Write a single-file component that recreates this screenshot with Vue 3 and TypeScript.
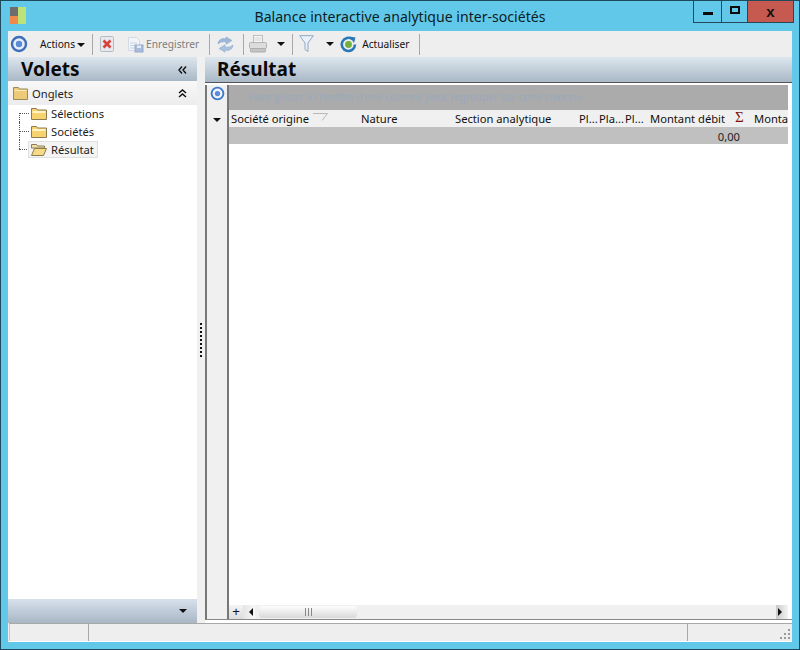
<script setup lang="ts">
interface Col { label: string; width: number }
const cols: Col[] = [
  { label: 'Nature', width: 94 },
  { label: 'Section analytique', width: 124 },
  { label: 'Pl...', width: 20 },
  { label: 'Pla...', width: 26 },
  { label: 'Pl...', width: 25 },
  { label: 'Montant débit', width: 85 },
]
const tree = [
  { label: 'Sélections', open: false },
  { label: 'Sociétés', open: false },
  { label: 'Résultat', open: true },
]
const gripDots = Array.from({ length: 9 })
</script>

<template>
  <div class="window">
    <header class="titlebar">
      <svg class="app-icon" width="16" height="18" viewBox="0 0 16 18">
        <rect x="0" y="0" width="8" height="9" fill="#6d6d6d" />
        <rect x="0" y="9" width="8" height="8" fill="#f08a4b" />
        <rect x="8" y="0" width="8" height="17" fill="#bde27a" />
      </svg>
      <div class="title">Balance interactive analytique inter-sociétés</div>
      <div class="controls">
        <div class="ctl ctl-min"><span class="min-bar"></span></div>
        <div class="ctl ctl-max"><span class="max-box"></span></div>
        <div class="ctl ctl-close">x</div>
      </div>
    </header>

    <div class="client">
      <div class="toolbar">
        <svg class="tb-first" width="18" height="18" viewBox="0 0 18 18">
          <circle cx="9" cy="9" r="7" fill="#e8eef8" stroke="#3d6fb8" stroke-width="2.4" />
          <circle cx="9" cy="9" r="3.2" fill="#5b8ad6" />
        </svg>
        <span class="tb-text actions">Actions</span>
        <span class="caret caret-actions"></span>
        <span class="sep sep-a"></span>
        <svg class="tb-del" width="14" height="16" viewBox="0 0 14 16">
          <rect x="0.500" y="0.500" width="13" height="15" rx="1" fill="#e6e8ee" stroke="#b4bac6" />
          <path d="M3.500 4.500l7 7M10.500 4.500l-7 7" stroke="#d8403a" stroke-width="2.600" />
        </svg>
        <svg class="tb-save" width="17" height="17" viewBox="0 0 17 17">
          <path d="M1.500 1.500h8l3 3v10h-11z" fill="#f2f4f8" stroke="#d3dbe6" />
          <path d="M3 7h7M3 9.500h7M3 12h5" stroke="#c9d4e2" />
          <rect x="8" y="9" width="8" height="7" fill="#a9bcdc" stroke="#94a9cc" />
          <rect x="10" y="9.500" width="4" height="2.500" fill="#e6ecf5" />
        </svg>
        <span class="tb-text disabled">Enregistrer</span>
        <span class="sep sep-b"></span>
        <svg class="tb-sync" width="17" height="17" viewBox="0 0 17 17">
          <path d="M1 8c0-3.500 3.500-6.500 8-5V.8l6 3.700L9 8.200V6C6 5.500 3.500 6 1 8z" fill="#9db7d8" stroke="#8aa5c8" stroke-width="0.500" />
          <path d="M16 9c0 3.500-3.500 6.500-8 5v2.200L2 12.500 8 8.800V11c3 .5 5.500 0 8-2z" fill="#a9c0de" stroke="#8aa5c8" stroke-width="0.500" />
        </svg>
        <span class="sep sep-c"></span>
        <svg class="tb-print" width="18" height="18" viewBox="0 0 18 18">
          <rect x="4.500" y="0.500" width="9" height="7" fill="#f6f6f6" stroke="#bdbdbd" />
          <path d="M5.500 3h7M5.500 5h7" stroke="#d4d4d4" />
          <rect x="0.500" y="7.500" width="17" height="6" rx="1" fill="#dcdcdc" stroke="#b2b2b2" />
          <rect x="1.500" y="13.500" width="15" height="3.500" rx="1" fill="#c4c4c4" stroke="#adadad" />
        </svg>
        <span class="caret caret-print"></span>
        <span class="sep sep-d"></span>
        <svg class="tb-filter" width="15" height="18" viewBox="0 0 15 18">
          <path d="M0.700 0.700h13.600L9 8v8.500l-3-2V8z" fill="#eaf0f7" stroke="#8fa9c6" />
        </svg>
        <span class="caret caret-filter"></span>
        <svg class="tb-refresh" width="17" height="17" viewBox="0 0 17 17">
          <path d="M12.500 3.200A6.600 6.600 0 1 0 15 8.500" fill="none" stroke="#2b78b8" stroke-width="2.600" />
          <circle cx="8.500" cy="8.500" r="3.400" fill="#6fb03f" />
          <path d="M9.500 0.500l6 1-1.500 5.500z" fill="#2b78b8" />
        </svg>
        <span class="tb-text refresh-label">Actualiser</span>
        <span class="sep sep-e"></span>
      </div>

      <div class="workspace">
        <aside class="side">
          <div class="pane-head side-head">
            <span>Volets</span>
            <svg class="chev" width="9" height="8" viewBox="0 0 9 8">
              <path d="M4 0.500L1 4l3 3.500M8 0.500L5 4l3 3.500" fill="none" stroke="#111" stroke-width="1.400" />
            </svg>
          </div>
          <div class="group-head">
            <svg width="15" height="13" viewBox="0 0 15 13">
              <path d="M0.500 0.500h5l1 1.500h8v10.500h-14z" fill="#eeca78" stroke="#9a8a5f" />
              <path d="M1.500 3h12v1h-12z" fill="#fbeebc" />
            </svg>
            <span class="group-label">Onglets</span>
            <svg class="dbl-up" width="9" height="9" viewBox="0 0 9 9">
              <path d="M1 4l3.500-3L8 4M1 8l3.500-3L8 8" fill="none" stroke="#111" stroke-width="1.500" />
            </svg>
          </div>
          <div class="tree">
            <div v-for="(t, i) in tree" :key="t.label" class="tree-row">
              <span class="tree-line" :class="{ first: i === 0, last: i === tree.length - 1 }"></span>
              <div class="tree-item" :class="{ sel: t.open }">
                <svg width="16" height="13" viewBox="0 0 16 13">
                  <template v-if="!t.open">
                    <path d="M0.500 1.500h5l1 1.500h9v9.500h-15z" fill="#f6d36f" stroke="#8c7c50" />
                    <path d="M1.500 4h13v2h-13z" fill="#fdf3c4" />
                  </template>
                  <template v-else>
                    <path d="M0.500 1.500h5l1 1.500h7v2h-13z" fill="#f1e0ae" stroke="#8c7c50" />
                    <path d="M3.500 5.500h12l-3 7h-12z" fill="#f8da86" stroke="#8c7c50" />
                  </template>
                </svg>
                <span class="tree-label">{{ t.label }}</span>
              </div>
            </div>
          </div>
          <div class="side-foot"><span class="foot-caret"></span></div>
        </aside>

        <div class="splitter">
          <div class="grip">
            <i v-for="(_, i) in gripDots" :key="i"></i>
          </div>
        </div>

        <section class="main">
          <div class="pane-head main-head"><span>Résultat</span></div>
          <div class="grid-wrap">
            <div class="row-rail">
              <svg class="rail-icon" width="15" height="15" viewBox="0 0 16 16">
                <circle cx="8" cy="8" r="6.300" fill="#f0f4fb" stroke="#3d79c9" stroke-width="2" />
                <circle cx="8" cy="8" r="2.800" fill="#5b8ad6" />
              </svg>
              <span class="rail-caret"></span>
            </div>
            <div class="grid">
              <div class="grouping">Faire glisser ici l'entête d'une colonne pour regrouper sur cette colonne.</div>
              <div class="col-head">
                <div class="cell first">
                  Société origine
                  <svg class="filter-tri" width="15" height="8" viewBox="0 0 15 8">
                    <path d="M0 0.500h14.500L9 7.500" fill="none" stroke="#b8b8b8" />
                  </svg>
                </div>
                <div v-for="c in cols" :key="c.label + c.width" class="cell" :style="{ width: c.width + 'px' }">{{ c.label }}</div>
                <div class="sigma">Σ</div>
                <div class="cell last">Monta</div>
              </div>
              <div class="total-row"><span>0,00</span></div>
              <div class="grid-body"></div>
              <div class="scrollbar">
                <div class="plus">+</div>
                <div class="arrow-btn left"><span class="tri-left"></span></div>
                <div class="thumb"><span class="thumb-grip"></span></div>
                <div class="track"></div>
                <div class="arrow-btn right"><span class="tri-right"></span></div>
              </div>
            </div>
          </div>
        </section>
      </div>

      <footer class="status">
        <div class="st st-a"></div>
        <div class="st st-b"></div>
        <div class="st st-c">
          <svg class="resize" width="11" height="11" viewBox="0 0 11 11" fill="#9a9a9a">
            <rect x="8" y="0" width="2" height="2" /><rect x="4" y="4" width="2" height="2" /><rect x="8" y="4" width="2" height="2" />
            <rect x="0" y="8" width="2" height="2" /><rect x="4" y="8" width="2" height="2" /><rect x="8" y="8" width="2" height="2" />
          </svg>
        </div>
      </footer>
    </div>
  </div>
</template>

<style>
html, body { margin: 0; padding: 0; background: #62c8ea; }
</style>

<style scoped>
.window {
  width: 800px;
  height: 650px;
  box-sizing: border-box;
  background: #62c8ea;
  border: 1px solid #1f4a5c;
  display: flex;
  flex-direction: column;
  font-family: "Noto Sans", "Open Sans", sans-serif;
  font-size: 11.2px;
  color: #111;
  overflow: hidden;
}
.titlebar {
  height: 30px;
  flex: none;
  display: flex;
  position: relative;
  padding-left: 9px;
}
.app-icon { margin-top: 6px; flex: none; }
.title {
  position: absolute;
  left: 0; right: 0; top: 6px;
  text-align: center;
  font-size: 14.1px;
  line-height: 20px;
  color: #0d1c22;
}
.controls {
  position: absolute;
  top: -1px;
  right: 5px;
  display: flex;
  height: 22px;
  border: 1px solid #26495a;
  border-top: none;
}
.ctl { display: flex; align-items: center; justify-content: center; width: 27px; border-right: 1px solid #26495a; }
.ctl-max { width: 25px; }
.ctl-close { width: 45px; border-right: none; background: #c75a50; font: bold 15px "Liberation Sans", sans-serif; color: #111; }
.min-bar { width: 10px; height: 3px; background: #0b0b0b; margin-top: 4px; }
.max-box { width: 6px; height: 4px; border: 2px solid #0b0b0b; margin-top: -2px; }

.client {
  flex: 1;
  margin: 0 7px 7px 7px;
  background: #f0f0f0;
  display: flex;
  flex-direction: column;
  min-height: 0;
}
.toolbar {
  height: 26px;
  flex: none;
  display: flex;
  align-items: center;
  background: #eeeeee;
  font-size: 10.2px;
}
.tb-first { margin-left: 2px; }
.tb-text { line-height: 16px; }
.actions { margin-left: 12px; }
.caret { width: 0; height: 0; border-left: 4px solid transparent; border-right: 4px solid transparent; border-top: 4px solid #111; }
.caret-actions { margin-left: 2px; margin-top: 2px; }
.sep { width: 1px; height: 21px; background: #a8a8a8; }
.sep-a { margin-left: 7px; }
.tb-del { margin-left: 7px; }
.tb-save { margin-left: 13px; }
.disabled { color: #7d7d7d; margin-left: 2px; }
.sep-b { margin-left: 10px; }
.tb-sync { margin-left: 7px; }
.sep-c { margin-left: 9px; }
.tb-print { margin-left: 5px; }
.caret-print { margin-left: 10px; }
.sep-d { margin-left: 7px; }
.tb-filter { margin-left: 6px; }
.caret-filter { margin-left: 12px; }
.tb-refresh { margin-left: 6px; }
.refresh-label { margin-left: 5px; }
.sep-e { margin-left: 10px; }

.workspace { flex: 1; display: flex; min-height: 0; }
.pane-head {
  height: 25px;
  flex: none;
  background: linear-gradient(#dde6ee, #a9b8c6);
  display: flex;
  align-items: center;
  font: bold 19px/25px "Noto Sans", sans-serif;
  color: #0a0a0a;
}
.side { width: 189px; flex: none; display: flex; flex-direction: column; background: #fff; }
.side-head { height: 24px; box-sizing: border-box; padding: 1px 10px 0 13px; justify-content: space-between; }
.group-head {
  height: 24px;
  flex: none;
  display: flex;
  align-items: center;
  padding-left: 5px;
  background: linear-gradient(#f8f8f8, #ececec);
}
.group-label { margin-left: 4px; color: #222; }
.dbl-up { margin-left: auto; margin-right: 10px; }
.tree { flex: 1; background: #fff; padding-top: 0; }
.tree-row { height: 18px; display: flex; align-items: center; position: relative; padding-left: 20px; top: -1px; }
.tree-line { position: absolute; left: 11px; top: 0; bottom: 0; width: 10px; }
.tree-line::before { content: ""; position: absolute; left: 0; top: 0; height: 100%; border-left: 1px dotted #555; }
.tree-line.first::before { top: 50%; height: 50%; }
.tree-line.last::before { height: 50%; }
.tree-line::after { content: ""; position: absolute; left: 0; right: 0; top: 50%; border-top: 1px dotted #555; }
.tree-item { display: flex; align-items: center; height: 17px; box-sizing: border-box; padding: 0 3px 0 2px; border: 1px solid transparent; position: relative; }
.tree-item.sel { background: #f4f4f4; border-color: #e0e0e0; }
.tree-label { margin-left: 4px; line-height: 15px; color: #222; }
.side-foot {
  height: 24px;
  flex: none;
  background: linear-gradient(#d6e1ec, #a9b6c4);
  display: flex;
  align-items: center;
  justify-content: flex-end;
  padding-right: 10px;
}
.foot-caret, .rail-caret { width: 0; height: 0; border-left: 4px solid transparent; border-right: 4px solid transparent; border-top: 4px solid #111; }

.splitter { width: 8px; flex: none; background: #f0f0f0; display: flex; align-items: center; justify-content: center; }
.grip { display: flex; flex-direction: column; gap: 2px; margin-left: -1px; }
.grip i { display: block; width: 2px; height: 2px; background: #111; }

.main { flex: 1; display: flex; flex-direction: column; min-width: 0; background: #fff; }
.main-head { padding-left: 12px; border-bottom: 1px solid #555; height: 25px; box-sizing: content-box; }
.grid-wrap { flex: 1; display: flex; min-height: 0; margin-top: 2px; margin-bottom: 3px; border-left: 2px solid #777; border-bottom: 1px solid #888; }
.row-rail { width: 20px; flex: none; background: #f0f0f0; border-right: 2px solid #777; display: flex; flex-direction: column; align-items: center; }
.rail-icon { margin-top: 1px; }
.rail-caret { margin-top: 17px; }
.grid { flex: 1; min-width: 0; display: flex; flex-direction: column; overflow: hidden; }
.grouping { height: 25px; flex: none; margin-right: 4px; background: #ababab; color: #9aa9bb; font-size: 10px; line-height: 25px; padding-left: 19px; white-space: nowrap; overflow: hidden; }
.col-head { height: 17px; flex: none; margin-right: 4px; display: flex; align-items: center; background: #f0f0f0; white-space: nowrap; overflow: hidden; }
.cell { flex: none; line-height: 18px; overflow: hidden; margin-top: 1px; }
.cell.first { width: 132px; padding-left: 2px; box-sizing: border-box; display: flex; align-items: center; }
.filter-tri { margin-left: 4px; margin-top: -4px; }
.sigma { width: 19px; flex: none; font: 15px/14px "Liberation Serif", serif; color: #7a1010; margin-top: -3px; box-sizing: border-box; }
.cell.last { flex: 1; min-width: 0; }
.total-row { height: 17px; flex: none; margin-right: 4px; background: #c0c0c0; text-align: right; padding-right: 48px; line-height: 19px; color: #222; }
.grid-body { flex: 1; background: #fff; }
.scrollbar { height: 14px; flex: none; display: flex; align-items: center; background: #f0f0f0; margin-right: 4px; }
.plus { width: 14px; height: 14px; font: 13px/14px "Liberation Sans", sans-serif; color: #111; text-align: center; background: linear-gradient(#f4f4f4, #dcdcdc); }
.arrow-btn { width: 12px; height: 14px; display: flex; align-items: center; background: linear-gradient(90deg, #e4e4e4, #f8f8f8); }
.arrow-btn.left { justify-content: flex-end; padding-right: 2px; box-sizing: border-box; }
.arrow-btn.right { justify-content: flex-start; padding-left: 2px; box-sizing: border-box; background: linear-gradient(90deg, #c8c8c8, #f4f4f4); }
.tri-left { border-top: 4px solid transparent; border-bottom: 4px solid transparent; border-right: 4px solid #111; }
.tri-right { border-top: 4px solid transparent; border-bottom: 4px solid transparent; border-left: 4px solid #111; }
.thumb { width: 98px; height: 12px; margin-left: 4px; border-radius: 3px; background: linear-gradient(#fdfdfd, #d9d9d9); display: flex; align-items: center; justify-content: center; }
.thumb-grip { width: 7px; height: 8px; background: repeating-linear-gradient(90deg, #888 0 1px, transparent 1px 3px); }
.track { flex: 1; }

.status { height: 19px; box-sizing: border-box; flex: none; display: flex; margin-left: 1px; border-top: 1px solid #a8a8a8; border-bottom: 1px solid #fff; background: #eeeeee; }
.st { border-left: 1px solid #c8c8c8; height: 100%; box-sizing: border-box; }
.st-a { width: 79px; }
.st-b { flex: 1; border-left-color: #a8a8a8; }
.st-c { width: 105px; border-left-color: #a8a8a8; display: flex; justify-content: flex-end; align-items: flex-end; padding: 0 1px 0 0; }
.resize { margin-bottom: 1px; }
</style>
